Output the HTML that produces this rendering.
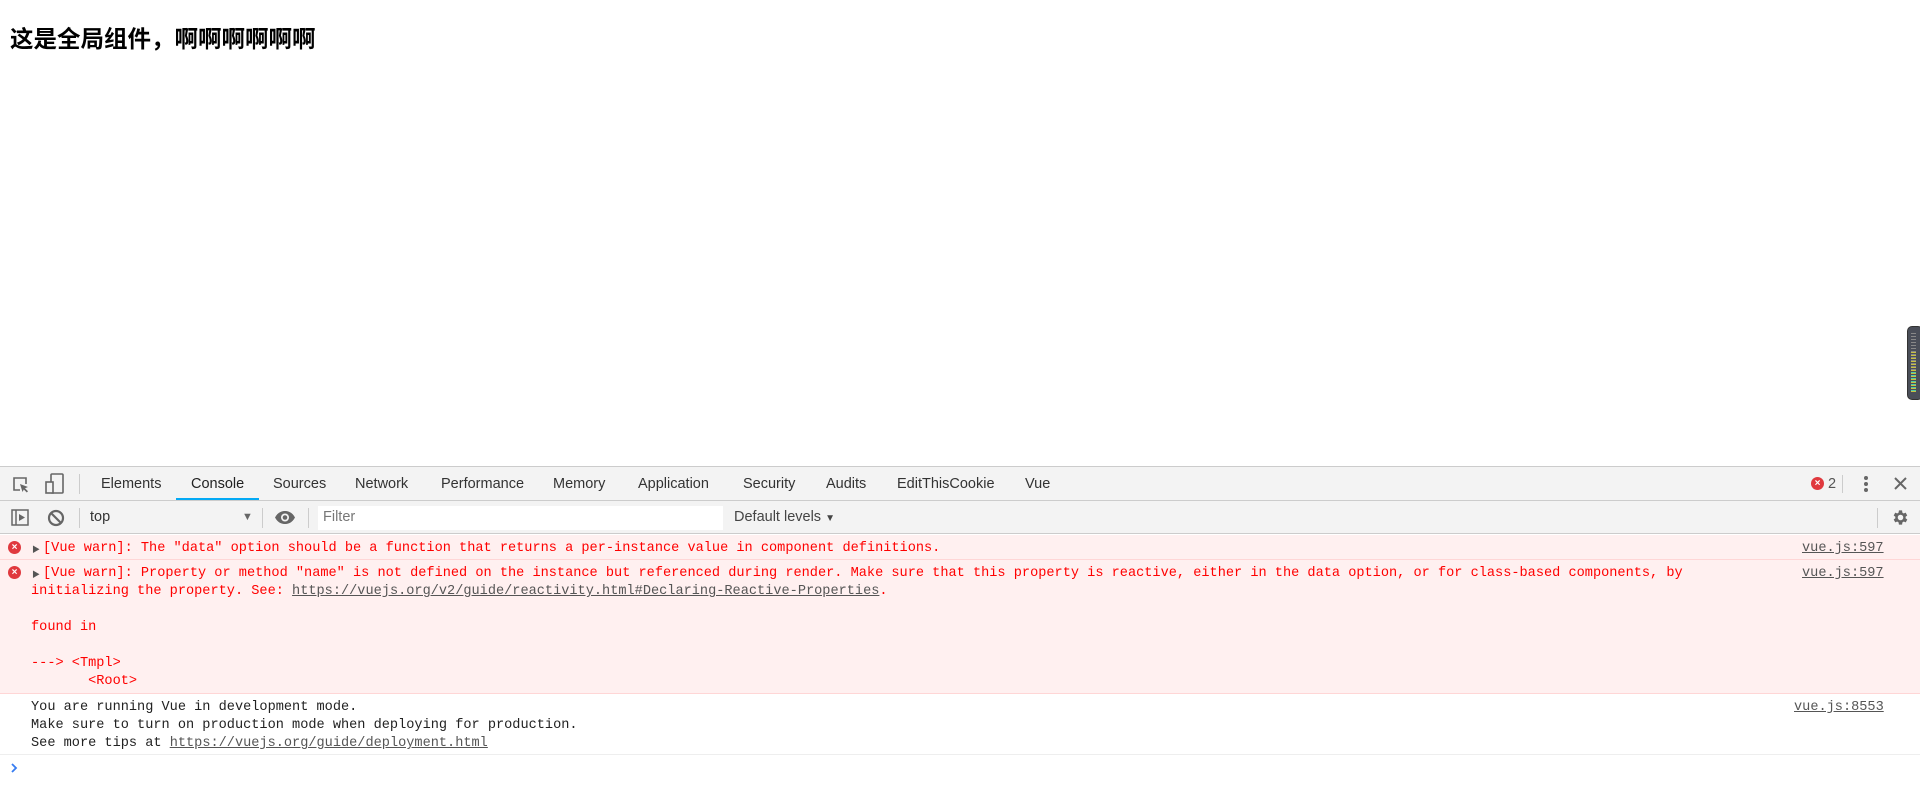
<!DOCTYPE html>
<html><head><meta charset="utf-8"><style>
*{margin:0;padding:0;box-sizing:border-box}
body{width:1920px;height:790px;position:relative;background:#fff;overflow:hidden;font-family:"Liberation Sans","Noto Sans CJK SC",sans-serif}
.abs{position:absolute}
h1{position:absolute;left:10px;top:25px;font-size:23.5px;font-weight:bold;line-height:28px;color:#000;white-space:nowrap;font-family:"Liberation Sans","Noto Sans CJK SC",sans-serif}
.bar{position:absolute;left:0;width:1920px;background:#f3f3f3;border-top:1px solid #ccc}
.tab{position:absolute;top:9px;font-size:14.5px;color:#333;white-space:nowrap}
.mono{font-family:"Liberation Mono",monospace;font-size:13.6px;line-height:18px;white-space:pre}
.red{color:#f00}
.lnk{color:#555;text-decoration:underline}
.src{position:absolute;color:#555;text-decoration:underline}
.sep{position:absolute;width:1px;background:#ccc}
.err{position:absolute;width:13px;height:13px;border-radius:50%;background:#e0393e;color:#fff;font-size:10px;line-height:13px;text-align:center;font-weight:bold}
</style></head><body>
<h1>这是全局组件，啊啊啊啊啊啊</h1>

<div class="abs" style="left:1907px;top:326px;width:16px;height:74px;background:#4a4e58;border-radius:5px;border:1px solid #333"></div>
<div class="abs" style="left:1911px;top:333px;width:5px;height:60px;background:repeating-linear-gradient(#888 0 1px,transparent 1px 3px)"></div>
<div class="abs" style="left:1911px;top:352px;width:5px;height:40px;background:repeating-linear-gradient(#c9c040 0 1px,transparent 1px 3px)"></div>
<div class="abs" style="left:1911px;top:372px;width:5px;height:20px;background:repeating-linear-gradient(#4fc9a8 0 1px,transparent 1px 3px)"></div>

<!-- tab bar -->
<div class="bar" style="top:466px;height:34px">
  <svg class="abs" style="left:12px;top:9px" width="18" height="18" viewBox="0 0 18 18"><path d="M8 14H2V2h12v6" fill="none" stroke="#666" stroke-width="1.6"/><path d="M8 8l8 3-3 1.3 3 3-1.2 1.2-3-3L10.5 16z" fill="#666"/></svg>
  <svg class="abs" style="left:45px;top:6px" width="20" height="22" viewBox="0 0 20 22"><rect x="6" y="1" width="12" height="19" rx="1" fill="none" stroke="#666" stroke-width="1.6"/><rect x="1" y="9" width="7" height="11" fill="#f3f3f3" stroke="#666" stroke-width="1.6"/></svg>
  <div class="sep" style="left:79px;top:7px;height:20px"></div>
  <div class="tab" style="left:101px">Elements</div>
  <div class="tab" style="left:191px;color:#222">Console</div>
  <div class="abs" style="left:176px;top:31px;width:83px;height:2px;background:#03a9f4"></div>
  <div class="tab" style="left:273px">Sources</div>
  <div class="tab" style="left:355px">Network</div>
  <div class="tab" style="left:441px">Performance</div>
  <div class="tab" style="left:553px">Memory</div>
  <div class="tab" style="left:638px">Application</div>
  <div class="tab" style="left:743px">Security</div>
  <div class="tab" style="left:826px">Audits</div>
  <div class="tab" style="left:897px">EditThisCookie</div>
  <div class="tab" style="left:1025px">Vue</div>
  <div class="err" style="left:1811px;top:10px">×</div>
  <div class="tab" style="left:1828px;color:#555">2</div>
  <div class="sep" style="left:1842px;top:8px;height:18px"></div>
  <div class="abs" style="left:1864px;top:9px;width:4px;height:4px;border-radius:50%;background:#666;box-shadow:0 6px 0 #666,0 12px 0 #666"></div>
  <svg class="abs" style="left:1894px;top:10px" width="13" height="13" viewBox="0 0 13 13"><path d="M1 1l11 11M12 1L1 12" stroke="#666" stroke-width="2"/></svg>
</div>

<!-- console toolbar -->
<div class="bar" style="top:500px;height:34px;border-bottom:1px solid #ccc">
  <svg class="abs" style="left:11px;top:8px" width="18" height="17" viewBox="0 0 18 17"><rect x="1" y="1" width="16" height="15" fill="none" stroke="#666" stroke-width="1.5"/><path d="M5 1v15" stroke="#666" stroke-width="1.5"/><path d="M8 5l6 3.5-6 3.5z" fill="#666"/></svg>
  <svg class="abs" style="left:47px;top:8px" width="18" height="18" viewBox="0 0 18 18"><circle cx="9" cy="9" r="7" fill="none" stroke="#666" stroke-width="2.2"/><path d="M4 4l10 10" stroke="#666" stroke-width="2.2"/></svg>
  <div class="sep" style="left:79px;top:7px;height:20px"></div>
  <div class="tab" style="left:90px;top:8px">top</div>
  <div class="abs" style="left:242px;top:10px;font-size:11px;color:#666">▼</div>
  <div class="sep" style="left:262px;top:7px;height:20px"></div>
  <svg class="abs" style="left:274px;top:9px" width="22" height="15" viewBox="0 0 22 15"><path d="M1 7.5C4 2 8 1 11 1s7 1 10 6.5C18 13 14 14 11 14S4 13 1 7.5z" fill="#666"/><circle cx="11" cy="7.5" r="4" fill="#f3f3f3"/><circle cx="11" cy="7.5" r="2.3" fill="#666"/></svg>
  <div class="sep" style="left:308px;top:7px;height:20px"></div>
  <div class="abs" style="left:318px;top:5px;width:405px;height:24px;background:#fff"></div>
  <div class="tab" style="left:323px;top:8px;color:#777">Filter</div>
  <div class="tab" style="left:734px;top:8px;color:#444">Default levels <span style="font-size:10px">▼</span></div>
  <div class="sep" style="left:1877px;top:7px;height:20px"></div>
  <svg class="abs" style="left:1891px;top:7px" width="19" height="19" viewBox="0 0 24 24"><path fill="#666" d="M19.4 13a7.5 7.5 0 000-2l2.1-1.6-2-3.5-2.5 1a7 7 0 00-1.7-1L15 3h-4l-.4 2.9a7 7 0 00-1.7 1l-2.5-1-2 3.5L6.5 11a7.5 7.5 0 000 2l-2.1 1.6 2 3.5 2.5-1a7 7 0 001.7 1L11 21h4l.4-2.9a7 7 0 001.7-1l2.5 1 2-3.5zM13 15.5a3.5 3.5 0 110-7 3.5 3.5 0 010 7z" transform="translate(-1 0)"/></svg>
</div>

<!-- row 1 -->
<div class="abs" style="left:0;top:535px;width:1920px;height:25px;background:#fff0f0;border-bottom:1px solid #ffd6d6"></div>
<div class="err" style="left:8px;top:541px">×</div>
<div class="abs" style="left:32px;top:544px;font-size:8px;color:#555">▶</div>
<div class="abs mono red" style="left:43px;top:540px">[Vue warn]: The "data" option should be a function that returns a per-instance value in component definitions.</div>
<div class="src mono" style="left:1802px;top:540px">vue.js:597</div>

<!-- row 2 -->
<div class="abs" style="left:0;top:560px;width:1920px;height:134px;background:#fff0f0;border-bottom:1px solid #ffd6d6"></div>
<div class="err" style="left:8px;top:566px">×</div>
<div class="abs" style="left:32px;top:569px;font-size:8px;color:#555">▶</div>
<div class="abs mono red" style="left:43px;top:565px">[Vue warn]: Property or method "name" is not defined on the instance but referenced during render. Make sure that this property is reactive, either in the data option, or for class-based components, by</div>
<div class="abs mono red" style="left:31px;top:583px">initializing the property. See: <span class="lnk">https://vuejs.org/v2/guide/reactivity.html#Declaring-Reactive-Properties</span>.

found in

---&gt; &lt;Tmpl&gt;
       &lt;Root&gt;</div>
<div class="src mono" style="left:1802px;top:565px">vue.js:597</div>

<!-- row 3 -->
<div class="abs mono" style="left:31px;top:699px;color:#222">You are running Vue in development mode.
Make sure to turn on production mode when deploying for production.
See more tips at <span class="lnk">https://vuejs.org/guide/deployment.html</span></div>
<div class="src mono" style="left:1794px;top:699px">vue.js:8553</div>
<div class="abs" style="left:0;top:754px;width:1920px;height:1px;background:#eee"></div>
<svg class="abs" style="left:11px;top:763px" width="7" height="10" viewBox="0 0 7 10"><path d="M1 1l4 4-4 4" fill="none" stroke="#367cf1" stroke-width="1.8"/></svg>
</body></html>
